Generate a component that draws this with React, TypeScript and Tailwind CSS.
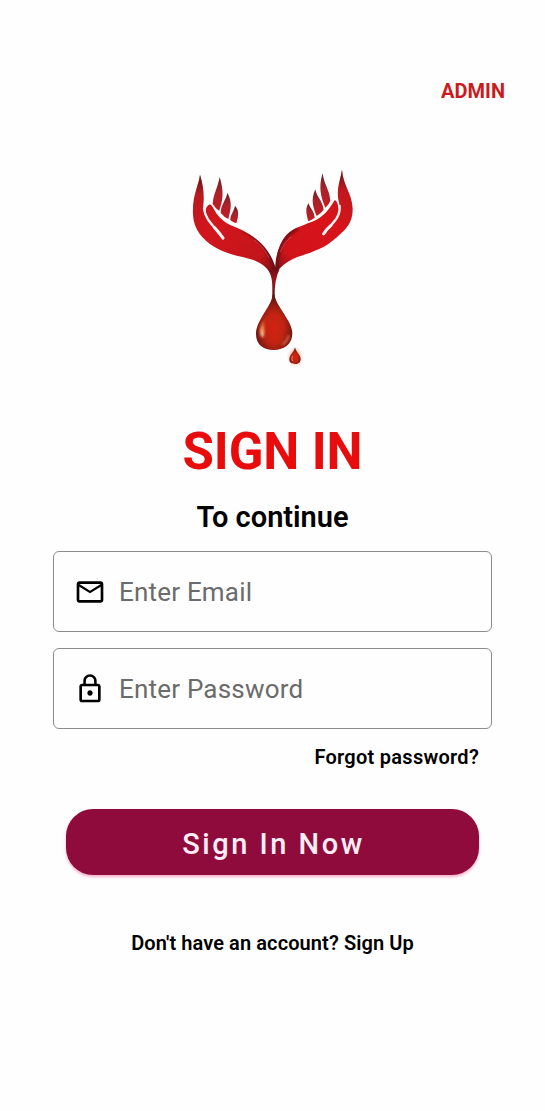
import React from "react";
import { MdMailOutline, MdLockOutline } from "react-icons/md";

const LEFT_HAND =
  "M60 44 C56 78 36 105 39 165 C41 209 69 240 105 262 C142 285 188 289 220 300 C248 311 267 327 276 352 L286 352 L286 322 C277 290 255 258 232 240 C210 222 178 205 158 198 C138 191 122 176 113 165 C103 153 99 138 90 133 C81 136 75 147 78 158 L76 164 Q69 152 70 135 C73 108 71 80 60 44Z";
const RIGHT_HAND =
  "M486 29 C482 57 469 84 475 119 C479 130 479 142 476 148 Q474 126 465 120 C452 136 444 160 408 180 C376 195 341 202 320 224 C298 249 287 285 286 322 L283 352 C291 326 320 304 352 291 C397 277 435 264 463 238 C490 214 519 194 518 145 C516 99 489 76 486 29Z";

function Logo() {
  return (
    <svg viewBox="0 0 555 645" className="h-[215px] w-[185px]" aria-hidden="true">
      <defs>
        <linearGradient id="left" gradientUnits="userSpaceOnUse" x1="40" y1="100" x2="290" y2="340">
          <stop offset="0" stopColor="#b51a20" />
          <stop offset="0.3" stopColor="#d3151c" />
          <stop offset="0.8" stopColor="#c3151b" />
          <stop offset="0.93" stopColor="#8d1217" />
          <stop offset="1" stopColor="#4c0d10" />
        </linearGradient>
        <linearGradient id="right" gradientUnits="userSpaceOnUse" x1="515" y1="90" x2="275" y2="330">
          <stop offset="0" stopColor="#b91a20" />
          <stop offset="0.3" stopColor="#d9121a" />
          <stop offset="0.8" stopColor="#d0141a" />
          <stop offset="0.92" stopColor="#941217" />
          <stop offset="1" stopColor="#4c0d10" />
        </linearGradient>
        <linearGradient id="finger" x1="0" y1="0" x2="0" y2="1">
          <stop offset="0" stopColor="#6f2025" />
          <stop offset="0.45" stopColor="#a8222a" />
          <stop offset="1" stopColor="#c51b22" />
        </linearGradient>
        <linearGradient id="tip" x1="0" y1="0" x2="0" y2="1">
          <stop offset="0" stopColor="#4a1216" stopOpacity="0.8" />
          <stop offset="1" stopColor="#4a1216" stopOpacity="0" />
        </linearGradient>
        <linearGradient id="stem" gradientUnits="userSpaceOnUse" x1="0" y1="325" x2="0" y2="430">
          <stop offset="0" stopColor="#6a1116" />
          <stop offset="0.35" stopColor="#9c151b" />
          <stop offset="0.75" stopColor="#641613" />
          <stop offset="1" stopColor="#7c1c14" />
        </linearGradient>
        <radialGradient id="drop" cx="0.5" cy="0.62" r="0.6">
          <stop offset="0" stopColor="#d42213" />
          <stop offset="0.45" stopColor="#c02411" />
          <stop offset="0.75" stopColor="#851b12" />
          <stop offset="1" stopColor="#4c120f" />
        </radialGradient>
        <linearGradient id="shine" x1="0" y1="0" x2="0" y2="1">
          <stop offset="0" stopColor="#ff9b60" stopOpacity="0.1" />
          <stop offset="0.65" stopColor="#f5a060" />
          <stop offset="1" stopColor="#fff0cf" stopOpacity="0.8" />
        </linearGradient>
        <radialGradient id="glow">
          <stop offset="0.4" stopColor="#ff9c80" stopOpacity="0.75" />
          <stop offset="1" stopColor="#ffc2b0" stopOpacity="0" />
        </radialGradient>
        <filter id="soft" x="-50%" y="-50%" width="200%" height="200%">
          <feGaussianBlur stdDeviation="3" />
        </filter>
        <clipPath id="leftClip">
          <path d={LEFT_HAND} />
        </clipPath>
        <clipPath id="rightClip">
          <path d={RIGHT_HAND} />
        </clipPath>
      </defs>

      <g fill="url(#finger)">
        <path d="M119 51 C114 80 99 105 98 132 Q106 145 118 153 C124 130 136 106 119 51Z" />
        <path d="M142 98 C138 121 122 134 122 158 Q132 171 145 177 C150 155 160 129 142 98Z" />
        <path d="M165 137 C162 153 150 166 151 181 Q159 187 169 190 C174 174 180 151 165 137Z" />
        <path d="M428 40 C415 80 422 111 436 143 Q448 133 451 122 C449 90 432 73 428 40Z" />
        <path d="M406 88 C391 120 400 144 410 168 Q423 160 431 149 C427 120 410 112 406 88Z" />
        <path d="M386 129 C374 147 380 164 385 184 Q396 179 404 173 C402 150 388 144 386 129Z" />
      </g>

      <path d={LEFT_HAND} fill="url(#left)" />
      <path d={RIGHT_HAND} fill="url(#right)" />
      <g clipPath="url(#leftClip)">
        <path d="M35 40H75V105H35Z" fill="url(#tip)" />
        <path
          d="M190 208 C235 230 268 272 288 330"
          fill="none"
          stroke="#5c0d13"
          strokeWidth="12"
          opacity="0.7"
          filter="url(#soft)"
        />
        <path d="M222 240 C243 256 257 274 267 295" fill="none" stroke="#ef7c70" strokeWidth="2" opacity="0.7" />
      </g>
      <g clipPath="url(#rightClip)">
        <path d="M465 25H510V90H465Z" fill="url(#tip)" />
        <path
          d="M284 335 C286 280 300 232 350 202"
          fill="none"
          stroke="#5c0d13"
          strokeWidth="18"
          opacity="0.65"
          filter="url(#soft)"
        />
        <path d="M301 276 C308 257 319 242 335 229" fill="none" stroke="#ef7c70" strokeWidth="2" opacity="0.7" />
      </g>
      <path d="M72 144 C76 181 98 192 129 235" fill="none" stroke="#fff3f1" strokeWidth="7" strokeLinecap="round" />
      <path d="M104 203 Q119 219 129 234" fill="none" stroke="#fff3f1" strokeWidth="9" strokeLinecap="round" />
      <path d="M479 138 C482 180 446 196 431 222" fill="none" stroke="#fff3f1" strokeWidth="7" strokeLinecap="round" />
      <path d="M453 196 Q439 207 431 221" fill="none" stroke="#fff3f1" strokeWidth="9" strokeLinecap="round" />

      <path
        fill="url(#drop)"
        d="M280 400 C274 441 228 481 228 522 C228 554 250 570 281 570 C313 570 337 553 337 520 C337 482 288 441 282 400Z"
      />
      <path
        fill="url(#stem)"
        d="M266 331 Q280 335 286 322 Q291 333 299 327 C288 350 284 375 284 400 L286 426 L275 426 L277 400 C277 373 278 355 266 331Z"
      />
      <path fill="url(#shine)" filter="url(#soft)" d="M255 474 C238 497 234 522 248 533 C258 522 249 501 255 474Z" />
      <path
        d="M326 528 Q321 545 309 552"
        fill="none"
        stroke="#ee8b60"
        strokeWidth="6"
        strokeLinecap="round"
        opacity="0.7"
        filter="url(#soft)"
      />

      <ellipse cx="345" cy="591" rx="25" ry="32" fill="url(#glow)" />
      <path
        fill="url(#drop)"
        d="M345 562 C342 577 328 585 328 598 C328 608 335 612 345 612 C356 612 362 606 362 597 C362 585 348 577 345 562Z"
      />
      <path d="M337 589 Q333 597 337 602" fill="none" stroke="#ffb58e" strokeWidth="3" strokeLinecap="round" opacity="0.7" />
    </svg>
  );
}

type FieldProps = {
  type: string;
  label: string;
  icon: React.ReactNode;
};

function Field({ type, label, icon }: FieldProps) {
  return (
    <label className="flex h-[81px] w-full items-center gap-[13px] rounded-[6px] border-[1.5px] border-[#8c8c8c] pl-5 text-black">
      {icon}
      <input
        type={type}
        placeholder={label}
        aria-label={label}
        className="min-w-0 flex-1 bg-transparent text-[26px] leading-8 tracking-[0.2px] outline-none placeholder:text-[#6b6b6b]"
      />
    </label>
  );
}

export default function App() {
  return (
    <main className="flex h-[1111px] w-[545px] flex-col items-center bg-[#fefefe] font-[Roboto,sans-serif] text-black">
      <header className="flex w-full justify-end pt-[79px] pr-10">
        <a className="text-[20px] leading-6 font-bold text-[#cb1b20]">ADMIN</a>
      </header>
      <div className="mt-[57px]">
        <Logo />
      </div>
      <h1 className="mt-[47px] text-[51px] leading-[60px] font-bold tracking-[-0.1px] text-[#e80c0c]">SIGN IN</h1>
      <h2 className="mt-[18px] text-[29px] leading-[34px] font-semibold">To continue</h2>
      <form className="mt-[17px] flex w-[439px] flex-col" onSubmit={(e) => e.preventDefault()}>
        <Field type="email" label="Enter Email" icon={<MdMailOutline size={32} />} />
        <div className="h-4" />
        <Field type="password" label="Enter Password" icon={<MdLockOutline size={32} />} />
        <a className="mt-4 mr-[13px] self-end text-[20px] leading-6 font-semibold tracking-[0.27px]">Forgot password?</a>
        <button
          type="submit"
          className="mt-10 h-[66px] w-[413px] self-center rounded-[27px] bg-[#8e0b3c] pt-[3px] pl-[2px] text-[29px] leading-8 font-medium tracking-[2.5px] text-[#ffedf6] shadow-[0_2px_3px_rgba(222,30,95,0.35)]"
        >
          Sign In Now
        </button>
      </form>
      <p className="mt-[56px] text-[20px] leading-6 font-semibold tracking-[0.09px]">
        Don't have an account? <a>Sign Up</a>
      </p>
    </main>
  );
}
